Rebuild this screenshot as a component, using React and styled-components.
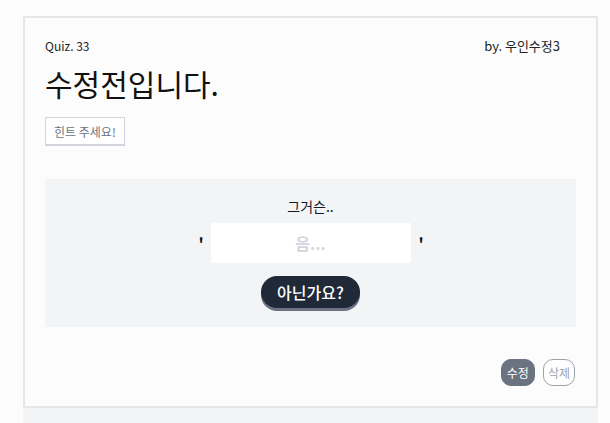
import React from "react";
import styled, { createGlobalStyle } from "styled-components";

const Global = createGlobalStyle`
  html, body { margin: 0; padding: 0; background: #fcfcfc; }
  body { font-family: "Noto Sans CJK KR", "Noto Sans", sans-serif; color: #111827; }
  * { box-sizing: border-box; }
`;

const Page = styled.div`
  padding: 16px 0 0 23px;
  width: 610px;
  height: 423px;
  overflow: hidden;
`;

const Card = styled.section`
  width: 575px;
  border: 2px solid #e5e7eb;
  background: #fcfcfc;
  padding: 19px 20px 20px 20px;
  display: flex;
  flex-direction: column;
`;

const NextStrip = styled.div`
  width: 575px;
  height: 30px;
  background: #f3f4f6;
`;

const Header = styled.div`
  display: flex;
  justify-content: space-between;
  align-items: flex-start;
`;

const QuizNo = styled.span`
  font-size: 12px;
  line-height: 18px;
  color: #1f1f1f;
`;

const Author = styled.span`
  font-size: 13px;
  line-height: 18px;
  margin-right: 16px;
  color: #222;
`;

const Title = styled.h1`
  margin: 8px 0 0 0;
  font-size: 30px;
  font-weight: 400;
  line-height: 40px;
  color: #111;
`;

const HintButton = styled.button`
  align-self: flex-start;
  margin-top: 14px;
  height: 29px;
  padding: 0 8px;
  border: 1px solid #d1d5db;
  border-bottom-width: 2px;
  background: #fff;
  font-family: inherit;
  font-size: 12px;
  color: #6b7280;
  cursor: pointer;
`;

const Panel = styled.div`
  margin-top: 33px;
  background: #f3f4f6;
  padding: 16px 0 19px;
  display: flex;
  flex-direction: column;
  align-items: center;
`;

const Lead = styled.div`
  font-size: 14px;
  line-height: 22px;
  color: #111827;
`;

const AnswerRow = styled.div`
  margin-top: 6px;
  display: flex;
  align-items: center;
  gap: 8px;
`;

const Quote = styled.span`
  font-size: 16px;
  font-weight: 700;
  width: 4px;
  text-align: center;
  color: #111;
`;

const Input = styled.input`
  width: 200px;
  height: 40px;
  border: none;
  border-radius: 2px;
  background: #fff;
  text-align: center;
  font-family: inherit;
  font-size: 16px;
  font-weight: 700;
  outline: none;
  &::placeholder { color: #d1d5db; }
`;

const SubmitButton = styled.button`
  margin-top: 13px;
  height: 32px;
  padding: 0 16px;
  border: none;
  border-radius: 16px;
  background: #1f2937;
  box-shadow: 0 3px 0 #6b7280;
  color: #fff;
  font-family: inherit;
  font-size: 16px;
  font-weight: 500;
  cursor: pointer;
`;

const Actions = styled.div`
  margin-top: 32px;
  display: flex;
  justify-content: flex-end;
  gap: 8px;
  padding-right: 1px;
`;

const SmallButton = styled.button`
  height: 27px;
  padding: 0 ${(p) => (p.$solid ? "5px" : "4px")};
  border-radius: 10px;
  border: 1px solid ${(p) => (p.$solid ? "#6b7280" : "#9ca3af")};
  background: ${(p) => (p.$solid ? "#6b7280" : "#fff")};
  color: ${(p) => (p.$solid ? "#fff" : "#9ca3af")};
  font-family: inherit;
  font-size: 12px;
  cursor: pointer;
`;

export default function App() {
  return (
    <>
      <Global />
      <Page>
        <Card>
          <Header>
            <QuizNo>Quiz. 33</QuizNo>
            <Author>by. 우인수정3</Author>
          </Header>
          <Title>수정전입니다.</Title>
          <HintButton>힌트 주세요!</HintButton>
          <Panel>
            <Lead>그거슨..</Lead>
            <AnswerRow>
              <Quote>'</Quote>
              <Input placeholder="음..." />
              <Quote>'</Quote>
            </AnswerRow>
            <SubmitButton>아닌가요?</SubmitButton>
          </Panel>
          <Actions>
            <SmallButton $solid>수정</SmallButton>
            <SmallButton>삭제</SmallButton>
          </Actions>
        </Card>
        <NextStrip />
      </Page>
    </>
  );
}
